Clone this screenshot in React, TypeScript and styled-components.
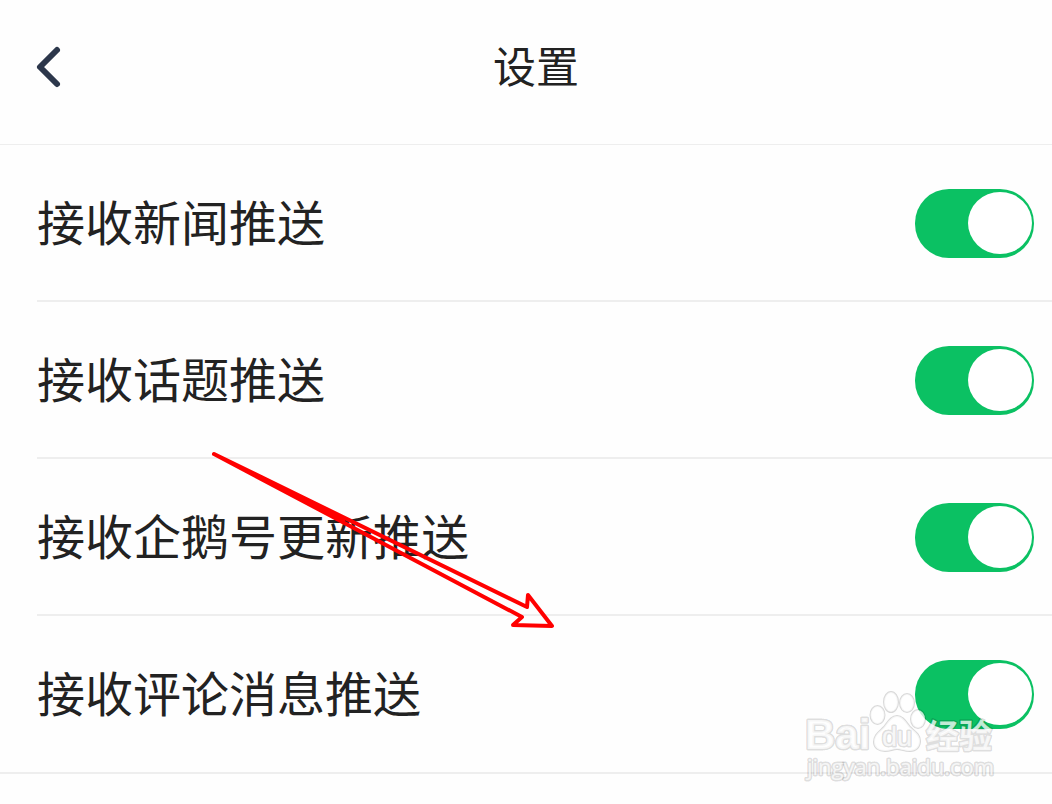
import React, { useState } from "react";
import styled, { createGlobalStyle } from "styled-components";

const GlobalStyle = createGlobalStyle`
  *, *::before, *::after { box-sizing: border-box; }
  body {
    margin: 0;
    background: #fefefe;
    color: #222;
    font-family: "Noto Sans CJK SC", sans-serif;
  }
`;

const Page = styled.div`
  position: relative;
  overflow: hidden;
  min-height: 100vh;
`;

const Header = styled.header`
  display: grid;
  grid-template-columns: 80px 1fr 60px;
  align-items: center;
  height: 145px;
  padding: 0 0 10px 0;
  border-bottom: 1px solid #eee;
`;

const BackButton = styled.button`
  display: flex;
  justify-content: center;
  padding: 0 0 0 16px;
  border: 0;
  background: none;
  cursor: pointer;
`;

const Title = styled.h1`
  margin: 0;
  padding-bottom: 6px;
  text-align: center;
  font-size: 43px;
  line-height: 64px;
  font-weight: 400;
`;

const List = styled.ul`
  margin: 0;
  padding: 0 0 1px 37px;
  list-style: none;
  border-bottom: 2px solid #eee;
`;

const Item = styled.li`
  & + & { border-top: 2px solid #eee; }
`;

const RowLabel = styled.label`
  display: flex;
  align-items: flex-start;
  justify-content: space-between;
  padding: 44px 18px 42px 0;
  font-size: 48px;
  line-height: 63px;
  cursor: pointer;
`;

const Switch = styled.input`
  appearance: none;
  flex: none;
  display: flex;
  align-items: center;
  width: 119px;
  height: 69px;
  margin: 0;
  padding: 0 2px 1px 2px;
  border-radius: 34px;
  background: #ccc;
  cursor: pointer;

  &::before {
    content: "";
    width: 64px;
    height: 62px;
    border-radius: 50%;
    background: #fff;
  }
  &:checked {
    justify-content: flex-end;
    background: #0bc163;
  }
`;

const Arrow = styled.svg`
  position: absolute;
  left: 200px;
  top: 440px;
  pointer-events: none;
`;

const Watermark = styled.svg`
  position: absolute;
  right: 52px;
  top: 684px;
  pointer-events: none;
`;

const ROWS = ["接收新闻推送", "接收话题推送", "接收企鹅号更新推送", "接收评论消息推送"];

function SettingRow({ label }: { label: string }) {
  const [on, setOn] = useState(true);
  return (
    <Item>
      <RowLabel>
        <span>{label}</span>
        <Switch type="checkbox" role="switch" checked={on} onChange={() => setOn(!on)} />
      </RowLabel>
    </Item>
  );
}

export default function App() {
  return (
    <Page lang="zh-CN">
      <GlobalStyle />
      <Header>
        <BackButton type="button" aria-label="返回">
          <svg width="28" height="44" viewBox="0 0 28 44" fill="none" stroke="#2c374b" strokeWidth="6" strokeLinecap="round" strokeLinejoin="round">
            <path d="M23 5 L6 22 L23 39" />
          </svg>
        </BackButton>
        <Title>设置</Title>
      </Header>
      <List>
        {ROWS.map((label) => (
          <SettingRow key={label} label={label} />
        ))}
      </List>
      <Arrow width="360" height="200" viewBox="200 440 360 200" fill="none" stroke="#f00" strokeWidth="4" strokeLinecap="round" strokeLinejoin="round" aria-hidden="true">
        <path d="M214 454 L527 607 L528 595 L552 626 L513 625 L522 617 Z" />
        <path fill="#f00" stroke="none" d="M214 454 L345 518 L345 523 Z" />
      </Arrow>
      <Watermark width="200" height="104" viewBox="800 684 200 104" fill="#fff" fillOpacity="0.75" stroke="#000" strokeOpacity="0.15" strokeWidth="2" strokeLinejoin="round" paintOrder="stroke">
        <ellipse cx="877.500" cy="715" rx="7" ry="9" />
        <ellipse cx="891" cy="702" rx="7" ry="10" />
        <ellipse cx="907" cy="703" rx="7" ry="9" />
        <ellipse cx="918" cy="719" rx="7" ry="9" />
        <path d="M897 716 C891 716 888 722 884 727 C879 732 874 735 874 742 C874 748 879 751 885 751 C890 751 893 749 897 749 C901 749 904 751 910 751 C916 751 920 747 920 741 C920 734 914 731 910 727 C906 722 903 716 897 716 Z" />
        <g strokeWidth="3">
          <text x="805" y="749" fontFamily="Liberation Sans, sans-serif" fontSize="42" fontWeight="700">Bai</text>
          <text x="882" y="746" fontFamily="Liberation Sans, sans-serif" fontSize="27">du</text>
          <text x="926" y="748" fontFamily="Noto Sans CJK SC, sans-serif" fontSize="33" fontWeight="700">经验</text>
          <text x="807" y="775" fontFamily="Open Sans, sans-serif" fontSize="22">jingyan.baidu.com</text>
        </g>
      </Watermark>
    </Page>
  );
}
